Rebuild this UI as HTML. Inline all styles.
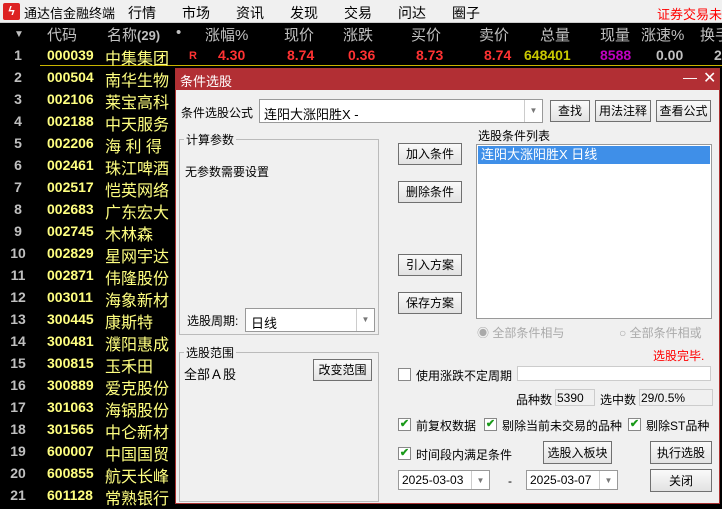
<!DOCTYPE html><html><head><meta charset="utf-8"><style>
*{margin:0;padding:0;box-sizing:border-box}
body{width:722px;height:507px;overflow:hidden;background:#000;font-family:"Liberation Sans","Noto Sans CJK SC",sans-serif;position:relative;font-size:13px}
.a{position:absolute;white-space:nowrap}
#menu{left:0;top:0;width:722px;height:23px;background:#f0f0f0;border-bottom:1px solid #ccc}
.hd{color:#c0c0c0;font-size:15px;top:24px}
.rn{color:#c0c0c0;font-size:14px;font-weight:bold;width:22px;text-align:center}
.cd{color:#ffff80;font-size:14px;font-weight:bold;left:47px}
.nm{color:#ffff80;font-size:16px;left:105px}
.dlg{left:175px;top:68px;width:545px;height:436px;background:#f0f0f0;border:1px solid #a33}
.t{color:#000;font-size:12px}
.btn{position:absolute;background:linear-gradient(#fafafa,#e2e2e2);border:1px solid #707070;font-size:12px;text-align:center;line-height:21px}
.inp{position:absolute;background:#fff;border:1px solid #999}
.cb{position:absolute;width:13px;height:13px;border:1px solid #888;background:#fff;color:#1a9a1a;font-size:11px;line-height:11px;text-align:center;font-weight:bold}
.dd{position:absolute;right:0;top:0;bottom:0;width:18px;border-left:1px solid #ccc;color:#777;font-size:8px;text-align:center}
.grp{position:absolute;border:1px solid #bbb}
</style></head><body>
<div class="a" id="menu"></div>
<div class="a" style="left:3px;top:3px;width:17px;height:17px;background:#d22;border-radius:2px;color:#fff;font-size:12px;text-align:center;line-height:17px;font-weight:bold">ϟ</div>
<div class="a" style="left:24px;top:3px;font-size:13px">通达信金融终端</div>
<div class="a" style="left:128px;top:3px;font-size:14px">行情</div>
<div class="a" style="left:182px;top:3px;font-size:14px">市场</div>
<div class="a" style="left:236px;top:3px;font-size:14px">资讯</div>
<div class="a" style="left:290px;top:3px;font-size:14px">发现</div>
<div class="a" style="left:344px;top:3px;font-size:14px">交易</div>
<div class="a" style="left:398px;top:3px;font-size:14px">问达</div>
<div class="a" style="left:452px;top:3px;font-size:14px">圈子</div>
<div class="a" style="left:657px;top:4px;font-size:13px;color:#f00">证券交易未登</div>
<div class="a" style="left:14px;top:29px;color:#c0c0c0;font-size:10px">▼</div>
<div class="a hd" style="left:47px">代码</div>
<div class="a hd" style="left:107px">名称<b style="font-size:13px">(29)</b></div>
<div class="a hd" style="left:176px">•</div>
<div class="a hd" style="left:205px">涨幅%</div>
<div class="a hd" style="left:284px">现价</div>
<div class="a hd" style="left:343px">涨跌</div>
<div class="a hd" style="left:411px">买价</div>
<div class="a hd" style="left:479px">卖价</div>
<div class="a hd" style="left:540px">总量</div>
<div class="a hd" style="left:600px">现量</div>
<div class="a hd" style="left:641px">涨速%</div>
<div class="a hd" style="left:700px">换手</div>
<div class="a" style="left:40px;top:65px;width:682px;height:1px;background:#c8b400"></div>
<div class="a" style="left:189px;top:50px;color:#f33;font-size:11px;font-weight:bold">R</div>
<div class="a" style="top:47px;font-size:14px;font-weight:bold;color:#ff3232;left:218px">4.30</div>
<div class="a" style="top:47px;font-size:14px;font-weight:bold;color:#ff3232;left:287px">8.74</div>
<div class="a" style="top:47px;font-size:14px;font-weight:bold;color:#ff3232;left:348px">0.36</div>
<div class="a" style="top:47px;font-size:14px;font-weight:bold;color:#ff3232;left:416px">8.73</div>
<div class="a" style="top:47px;font-size:14px;font-weight:bold;color:#ff3232;left:484px">8.74</div>
<div class="a" style="top:47px;font-size:14px;font-weight:bold;color:#c8c800;left:524px">648401</div>
<div class="a" style="top:47px;font-size:14px;font-weight:bold;color:#c000c0;left:600px">8588</div>
<div class="a" style="top:47px;font-size:14px;font-weight:bold;color:#c0c0c0;left:656px">0.00</div>
<div class="a" style="top:47px;font-size:14px;font-weight:bold;color:#c0c0c0;left:714px">2</div>
<div id="rows"></div>
<script>
var d=[["000039","中集集团"],["000504","南华生物"],["002106","莱宝高科"],["002188","中天服务"],["002206","海 利 得"],["002461","珠江啤酒"],["002517","恺英网络"],["002683","广东宏大"],["002745","木林森"],["002829","星网宇达"],["002871","伟隆股份"],["003011","海象新材"],["300445","康斯特"],["300481","濮阳惠成"],["300815","玉禾田"],["300889","爱克股份"],["301063","海锅股份"],["301565","中仑新材"],["600007","中国国贸"],["600855","航天长峰"],["601128","常熟银行"]];
var h="";for(var i=0;i<21;i++){var y=46+i*22;h+='<div class="a rn" style="left:7px;top:'+(y+1)+'px">'+(i+1)+'</div><div class="a cd" style="top:'+(y+1)+'px">'+d[i][0]+'</div><div class="a nm" style="top:'+(y-1)+'px">'+d[i][1]+'</div>';}
document.getElementById("rows").innerHTML=h;
</script>
<div class="a dlg">
<div class="a" style="left:0;top:0;width:543px;height:21px;background:#b22f34"></div>
<div class="a" style="left:4px;top:2px;color:#fff;font-size:13px">条件选股</div>
<div class="a" style="left:507px;top:0;color:#fff;font-size:14px">—</div>
<div class="a" style="left:527px;top:-1px;color:#fff;font-size:16px">✕</div>
<div class="a t" style="left:5px;top:35px">条件选股公式</div>
<div class="inp" style="left:83px;top:30px;width:284px;height:24px"><span class="a t" style="left:4px;top:4px;font-size:13px">连阳大涨阳胜X -</span><div class="dd" style="line-height:22px">▼</div></div>
<div class="btn" style="left:374px;top:31px;width:40px;height:22px">查找</div>
<div class="btn" style="left:419px;top:31px;width:56px;height:22px">用法注释</div>
<div class="btn" style="left:480px;top:31px;width:55px;height:22px">查看公式</div>
<div class="grp" style="left:3px;top:70px;width:200px;height:196px"></div>
<div class="a t" style="left:8px;top:62px;background:#f0f0f0;padding:0 2px">计算参数</div>
<div class="a t" style="left:9px;top:94px">无参数需要设置</div>
<div class="a t" style="left:11px;top:243px">选股周期:</div>
<div class="inp" style="left:69px;top:239px;width:130px;height:24px"><span class="a t" style="left:5px;top:4px;font-size:13px">日线</span><div class="dd" style="line-height:22px">▼</div></div>
<div class="grp" style="left:3px;top:283px;width:200px;height:150px"></div>
<div class="a t" style="left:8px;top:275px;background:#f0f0f0;padding:0 2px">选股范围</div>
<div class="a t" style="left:8px;top:295px;font-size:13px">全部Ａ股</div>
<div class="btn" style="left:137px;top:290px;width:59px;height:22px">改变范围</div>
<div class="btn" style="left:222px;top:74px;width:64px;height:22px">加入条件</div>
<div class="btn" style="left:222px;top:112px;width:64px;height:22px">删除条件</div>
<div class="btn" style="left:222px;top:185px;width:64px;height:22px">引入方案</div>
<div class="btn" style="left:222px;top:223px;width:64px;height:22px">保存方案</div>
<div class="a t" style="left:302px;top:58px">选股条件列表</div>
<div class="inp" style="left:300px;top:75px;width:236px;height:175px"><div style="margin:1px;background:#3f8fe8;color:#fff;font-size:13px;padding:1px 3px;height:18px;line-height:16px">连阳大涨阳胜X 日线</div></div>
<div class="a" style="left:301px;top:255px;color:#aaa;font-size:12px">◉ 全部条件相与</div>
<div class="a" style="left:443px;top:255px;color:#aaa;font-size:12px">○ 全部条件相或</div>
<div class="a" style="left:477px;top:278px;color:#f00;font-size:12px">选股完毕.</div>
<div class="cb" style="left:222px;top:299px"></div>
<div class="a t" style="left:240px;top:298px">使用涨跌不定周期</div>
<div class="inp" style="left:341px;top:297px;width:194px;height:15px;border-color:#ccc"></div>
<div class="a t" style="left:340px;top:322px">品种数</div>
<div class="inp" style="left:379px;top:320px;width:40px;height:17px;background:#f0f0f0;border-color:#ccc"><span class="a t" style="left:1px;top:1px">5390</span></div>
<div class="a t" style="left:424px;top:322px">选中数</div>
<div class="inp" style="left:463px;top:320px;width:74px;height:17px;background:#f0f0f0;border-color:#ccc"><span class="a t" style="left:1px;top:1px">29/0.5%</span></div>
<div class="cb" style="left:222px;top:349px">✔</div><div class="a t" style="left:240px;top:348px">前复权数据</div>
<div class="cb" style="left:308px;top:349px">✔</div><div class="a t" style="left:326px;top:348px">剔除当前未交易的品种</div>
<div class="cb" style="left:452px;top:349px">✔</div><div class="a t" style="left:470px;top:348px">剔除ST品种</div>
<div class="cb" style="left:222px;top:378px">✔</div><div class="a t" style="left:240px;top:377px">时间段内满足条件</div>
<div class="btn" style="left:367px;top:372px;width:69px;height:23px;line-height:22px">选股入板块</div>
<div class="btn" style="left:474px;top:372px;width:62px;height:23px;line-height:22px">执行选股</div>
<div class="btn" style="left:474px;top:400px;width:62px;height:23px;line-height:22px">关闭</div>
<div class="inp" style="left:222px;top:401px;width:92px;height:20px"><span class="a" style="left:3px;top:2px;font-size:12px">2025-03-03</span><div class="dd" style="line-height:19px">▼</div></div>
<div class="a t" style="left:332px;top:405px">-</div>
<div class="inp" style="left:350px;top:401px;width:92px;height:20px"><span class="a" style="left:3px;top:2px;font-size:12px">2025-03-07</span><div class="dd" style="line-height:19px">▼</div></div>
</div>
</body></html>
